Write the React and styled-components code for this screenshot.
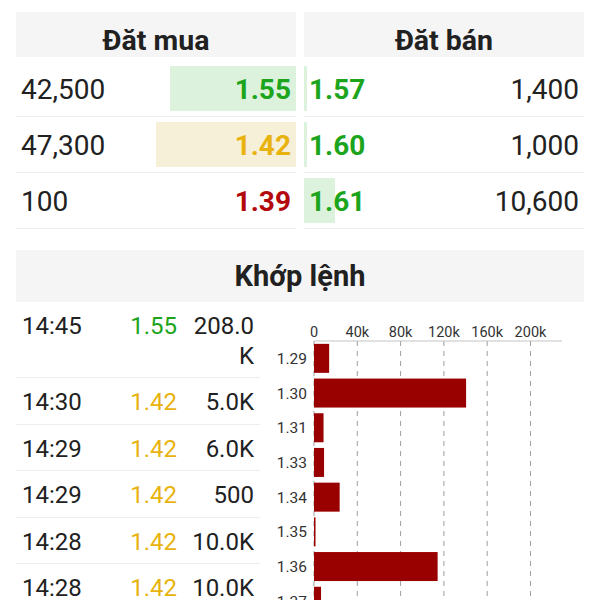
import React from "react";
import styled, { createGlobalStyle } from "styled-components";

const GlobalStyle = createGlobalStyle`
  html, body {
    margin: 0;
    padding: 0;
    background: #ffffff;
    font-family: Roboto, "Noto Sans", "Liberation Sans", sans-serif;
    color: #212121;
  }
  body { overflow: hidden; }
`;

const COLORS = {
  up: "#1ca51c",
  ref: "#e9b30f",
  down: "#b3090d",
};
const BAR_BG = {
  up: "#ddf2dd",
  ref: "#f7f0d8",
  down: "#f7dede",
};

const Page = styled.div`
  padding: 12px 16px 0;
  width: 568px;
`;

const OrderBook = styled.div`
  display: grid;
  grid-template-columns: 1fr 1fr;
  column-gap: 8px;
`;

const Side = styled.div`
  display: flex;
  flex-direction: column;
`;

const SideHeader = styled.div`
  height: 45px;
  box-sizing: border-box;
  padding-top: 14px;
  background: #f5f5f5;
  text-align: center;
  font-size: 28.5px;
  font-weight: 700;
  line-height: 30px;
  color: #212121;
  margin-bottom: 4px;
  overflow: hidden;
`;

const BookRow = styled.div`
  position: relative;
  height: 56px;
  box-sizing: border-box;
  border-bottom: 1px solid #eeeeee;
  display: flex;
  align-items: center;
  justify-content: space-between;
  padding: 2px 5px 0 5px;
`;

const DepthBar = styled.div`
  position: absolute;
  top: 5px;
  height: 45px;
  ${(p) => (p.$align === "right" ? "right: 0;" : "left: 0;")}
  background: ${(p) => BAR_BG[p.$tone]};
`;

const Volume = styled.span`
  position: relative;
  font-size: 28px;
  font-weight: 400;
  color: #212121;
`;

const Price = styled.span`
  position: relative;
  font-size: 28px;
  font-weight: 700;
  color: ${(p) => COLORS[p.$tone]};
`;

const MatchHeader = styled.div`
  margin-top: 21px;
  height: 52px;
  box-sizing: border-box;
  padding-top: 11px;
  background: #f5f5f5;
  text-align: center;
  font-size: 29px;
  font-weight: 700;
  line-height: 31px;
  overflow: hidden;
`;

const MatchBody = styled.div`
  display: grid;
  grid-template-columns: 244px 1fr;
  align-items: start;
`;

const TradeList = styled.div`
  display: flex;
  flex-direction: column;
`;

const TradeRow = styled.div`
  display: grid;
  grid-template-columns: 1fr 78px 72px;
  column-gap: 5px;
  padding: 10px 6px 6px 6px;
  border-bottom: 1px solid #eeeeee;
  font-size: 24px;
  line-height: 29.5px;
`;

const TradeTime = styled.span`
  color: #212121;
`;

const TradePrice = styled.span`
  text-align: right;
  color: ${(p) => COLORS[p.$tone]};
`;

const TradeVolume = styled.span`
  text-align: right;
  color: #212121;
  overflow-wrap: anywhere;
`;

const ChartWrap = styled.div`
  display: flex;
`;

const buy = [
  { vol: "42,500", price: "1.55", tone: "up", bar: 126 },
  { vol: "47,300", price: "1.42", tone: "ref", bar: 140 },
  { vol: "100", price: "1.39", tone: "down", bar: 0 },
];
const sell = [
  { vol: "1,400", price: "1.57", tone: "up", bar: 3 },
  { vol: "1,000", price: "1.60", tone: "up", bar: 3 },
  { vol: "10,600", price: "1.61", tone: "up", bar: 31 },
];
const trades = [
  { t: "14:45", p: "1.55", tone: "up", v: "208.0K" },
  { t: "14:30", p: "1.42", tone: "ref", v: "5.0K" },
  { t: "14:29", p: "1.42", tone: "ref", v: "6.0K" },
  { t: "14:29", p: "1.42", tone: "ref", v: "500" },
  { t: "14:28", p: "1.42", tone: "ref", v: "10.0K" },
  { t: "14:28", p: "1.42", tone: "ref", v: "10.0K" },
];
const volumeByPrice = [
  { p: "1.29", v: 14 },
  { p: "1.30", v: 140.5 },
  { p: "1.31", v: 8.8 },
  { p: "1.33", v: 9.3 },
  { p: "1.34", v: 23.7 },
  { p: "1.35", v: 1.4 },
  { p: "1.36", v: 114.2 },
  { p: "1.37", v: 6.5 },
  { p: "1.38", v: 4 },
];

function VolumeChart() {
  const x0 = 54;
  const axisY = 39;
  const pxPerK = 43.3 / 40;
  const band = 34.7;
  const barH = 29;
  const ticks = [0, 40, 80, 120, 160, 200];
  const height = axisY + band * volumeByPrice.length;
  return (
    <svg width="324" height={height} viewBox={`0 0 324 ${height}`}>
      {ticks.map((t) => (
        <line
          key={"g" + t}
          x1={x0 + t * pxPerK}
          x2={x0 + t * pxPerK}
          y1={axisY}
          y2={height}
          stroke="#9e9e9e"
          strokeWidth="1"
          strokeDasharray="5 5"
        />
      ))}
      <line x1={x0} x2={302} y1={axisY} y2={axisY} stroke="#c4c4c4" strokeWidth="1" />
      {ticks.map((t) => (
        <text
          key={"t" + t}
          x={x0 + t * pxPerK}
          y={35.5}
          textAnchor="middle"
          fontSize="14.5"
          fontFamily="Roboto, sans-serif"
          fill="#333333"
        >
          {t === 0 ? "0" : `${t}k`}
        </text>
      ))}
      {volumeByPrice.map((d, i) => {
        const y = axisY + i * band;
        return (
          <g key={d.p}>
            <rect
              x={x0}
              y={y + (band - barH) / 2}
              width={Math.max(1, d.v * pxPerK)}
              height={barH}
              fill="#990000"
            />
            <text
              x={47}
              y={y + band / 2 + 5.5}
              textAnchor="end"
              fontSize="15.5"
              fontFamily="Roboto, sans-serif"
              fill="#333333"
            >
              {d.p}
            </text>
          </g>
        );
      })}
    </svg>
  );
}

export default function App() {
  return (
    <>
      <GlobalStyle />
      <Page>
        <OrderBook>
          <Side>
            <SideHeader>Đăt mua</SideHeader>
            {buy.map((r, i) => (
              <BookRow key={i}>
                <DepthBar $align="right" $tone={r.tone} style={{ width: r.bar }} />
                <Volume>{r.vol}</Volume>
                <Price $tone={r.tone}>{r.price}</Price>
              </BookRow>
            ))}
          </Side>
          <Side>
            <SideHeader>Đăt bán</SideHeader>
            {sell.map((r, i) => (
              <BookRow key={i}>
                <DepthBar $align="left" $tone={r.tone} style={{ width: r.bar }} />
                <Price $tone={r.tone}>{r.price}</Price>
                <Volume>{r.vol}</Volume>
              </BookRow>
            ))}
          </Side>
        </OrderBook>
        <MatchHeader>Khớp lệnh</MatchHeader>
        <MatchBody>
          <TradeList>
            {trades.map((t, i) => (
              <TradeRow key={i}>
                <TradeTime>{t.t}</TradeTime>
                <TradePrice $tone={t.tone}>{t.p}</TradePrice>
                <TradeVolume>{t.v}</TradeVolume>
              </TradeRow>
            ))}
          </TradeList>
          <ChartWrap>
            <VolumeChart />
          </ChartWrap>
        </MatchBody>
      </Page>
    </>
  );
}
